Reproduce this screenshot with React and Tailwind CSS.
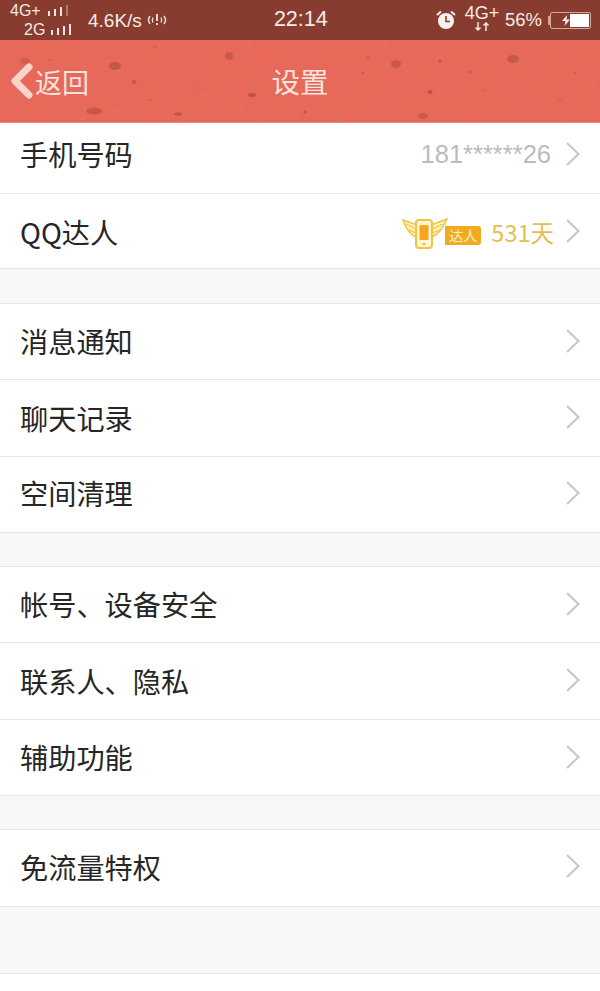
import React from "react";

const cjk = "font-['Noto_Sans_CJK_SC','Noto_Sans',sans-serif]";

function Chevron() {
  return (
    <svg width="16" height="26" viewBox="0 0 16 26" fill="none" className="shrink-0 -mt-[2px]">
      <path d="M2 2 L13.5 13 L2 24" stroke="#c8c8ca" strokeWidth="2.2" />
    </svg>
  );
}

function Row({ label, h, pad = "", children }) {
  return (
    <div className={`flex items-center bg-white pl-[20px] pr-[19px] border-b border-[#e6e6e9] ${h} ${pad}`}>
      <span className="text-[28.2px] leading-none text-[#262626] flex-1">{label}</span>
      {children}
      <Chevron />
    </div>
  );
}

function Gap({ h }) {
  return <div className={`bg-[#f7f8fa] border-b border-[#e6e7ea] ${h}`} />;
}

const spots = [
  [25, 61, 5, 3, 0.5], [115, 66, 6, 4, 0.7], [134, 82, 2.5, 2, 0.7], [94, 111, 8, 3.5, 0.65],
  [178, 114, 4, 1.5, 0.8], [229, 56, 4, 4, 0.6], [252, 95, 4, 2, 0.8], [396, 64, 5, 4, 0.65],
  [440, 61, 1.5, 1.5, 0.8], [513, 59, 6, 4, 0.65], [430, 92, 2.5, 2, 0.9], [305, 112, 2, 2, 0.6],
  [423, 116, 5, 3, 0.6], [155, 47, 2, 1, 0.4], [50, 60, 2, 1.5, 0.4], [368, 58, 1.5, 1.5, 0.5],
  [363, 73, 1.5, 1.5, 0.5], [470, 72, 1.5, 1.5, 0.5], [575, 73, 1.5, 1.5, 0.5], [275, 70, 1.5, 1, 0.4],
  [318, 88, 2, 1, 0.3], [200, 88, 1.5, 1, 0.3], [485, 90, 2, 1, 0.3], [560, 100, 2, 1, 0.3], [150, 100, 2, 1, 0.3],
];

function Texture() {
  return (
    <svg className="absolute inset-0" width="600" height="83" viewBox="0 40 600 83">
      <defs>
        <filter id="grain" x="0" y="0" width="100%" height="100%">
          <feTurbulence type="fractalNoise" baseFrequency="0.09 0.14" numOctaves="3" seed="4" />
          <feColorMatrix values="0 0 0 0 0.62  0 0 0 0 0.24  0 0 0 0 0.18  0 0 0 1.3 -0.62" />
        </filter>
      </defs>
      <rect x="0" y="40" width="600" height="83" filter="url(#grain)" opacity="0.45" />
      {spots.map(([cx, cy, rx, ry, o], i) => (
        <ellipse key={i} cx={cx} cy={cy} rx={rx} ry={ry} fill="#b5503f" opacity={o} />
      ))}
    </svg>
  );
}

function Bars({ dim }) {
  const hs = [5, 7, 9, 11];
  return (
    <span className="flex items-end gap-[4px] h-[11px]">
      {hs.map((x, i) => (
        <span key={i} className="w-[2px] bg-[#f3e4df]" style={{ height: x, opacity: dim && i === 3 ? 0.35 : 1 }} />
      ))}
    </span>
  );
}

export default function App() {
  return (
    <div className={`w-[600px] h-[991px] overflow-hidden bg-white flex flex-col ${cjk}`}>
      <div className="h-[40px] bg-[#873c2f] flex items-center text-[#f6ebe7] font-['Liberation_Sans',sans-serif] pl-[10px] pr-[9px]">
        <div className="w-[66px] flex flex-col text-[16px] leading-[19px]">
          <div className="flex items-center gap-[7px]"><span>4G+</span><Bars dim /></div>
          <div className="flex items-center gap-[6px] pl-[14px]"><span>2G</span><Bars /></div>
        </div>
        <span className="ml-[12px] text-[19px] leading-none">4.6K/s</span>
        <svg width="24" height="16" viewBox="0 0 24 16" className="ml-[3px]" fill="none" stroke="#f3e4df" strokeWidth="1.4">
          <path d="M5 4 Q2 8 5 12 M8 5.5 Q6.5 8 8 10.5 M16 5.5 Q17.5 8 16 10.5 M19 4 Q22 8 19 12" />
          <path d="M12 2 V9 M12 11 V13" strokeWidth="1.8" />
        </svg>
        <span className="ml-[105px] text-[21.5px] leading-none">22:14</span>
        <div className="flex-1" />
        <svg width="20" height="20" viewBox="0 0 20 20" className="mr-[8px]">
          <circle cx="10" cy="11" r="8" fill="#f9f1ee" />
          <path d="M10 6 V11.5 H14" stroke="#873c2f" strokeWidth="1.6" fill="none" />
          <path d="M1 5 L5 1.5 M19 5 L15 1.5" stroke="#f9f1ee" strokeWidth="2" />
        </svg>
        <div className="flex flex-col items-center w-[36px] mr-[5px] -mt-[4px]">
          <span className="text-[18px] leading-[17px]">4G+</span>
          <svg width="16" height="9" viewBox="0 0 16 9" fill="none" stroke="#f3e4df" strokeWidth="1.5">
            <path d="M4 0 V8 M1.5 5.5 L4 8 L6.5 5.5 M12 9 V1 M9.5 3.5 L12 1 L14.5 3.5" />
          </svg>
        </div>
        <span className="text-[18.5px] leading-none mr-[6px]">56%</span>
        <div className="w-[2px] h-[9px] bg-[#d9a79a] rounded-l-[1px]" />
        <div className="w-[41px] h-[17px] border border-[#d9a79a] rounded-[2px] p-[1px] flex items-center justify-end">
          <svg width="10" height="11" viewBox="0 0 10 11" className="mr-[-1px]">
            <path d="M6 0 L1 6 H4.5 L3.5 11 L9 4.5 H5.5 Z" fill="#f6ebe7" />
          </svg>
          <div className="w-[19px] h-full bg-white" />
        </div>
      </div>

      <div className="relative h-[83px] bg-[#e8685a] border-b border-[#f08d80] flex items-center justify-center text-[#f9e3dd]">
        <Texture />
        <span className="relative text-[28.5px] leading-none">设置</span>
        <div className="absolute left-[9px] top-0 bottom-0 flex items-center gap-[1px]">
          <svg width="26" height="36" viewBox="0 0 26 36" fill="none" className="-mr-[1px]">
            <path d="M20 4 L6 18 L20 32" stroke="#f6d5cd" strokeWidth="7" strokeLinecap="round" strokeLinejoin="round" />
          </svg>
          <span className="text-[27px] leading-none">返回</span>
        </div>
      </div>

      <Row label="手机号码" h="h-[71px]" pad="pb-[7px]">
        <span className="text-[25.5px] leading-none text-[#bcbcbe] font-['Liberation_Sans',sans-serif] mr-[14px]">181******26</span>
      </Row>
      <Row label="QQ达人" h="h-[75px]" pad="pt-[2px]">
        <div className="flex items-center mr-[11px] mt-[2px]">
          <svg width="46" height="33" viewBox="0 0 46 33" fill="none" className="-mr-[3px] relative z-10">
            <path d="M1 3 L15 8 L15 20 Q6 18 1 3 Z" fill="#fff2b8" stroke="#efc544" strokeWidth="1.5" />
            <path d="M4 7 L14 12 M7 13 L14 16" stroke="#efc544" strokeWidth="1.3" />
            <path d="M45 2 L29 8 L29 20 Q38 18 45 2 Z" fill="#fff2b8" stroke="#efc544" strokeWidth="1.5" />
            <path d="M41 7 L30 12 M38 13 L30 16" stroke="#efc544" strokeWidth="1.3" />
            <rect x="14" y="3" width="16" height="28" rx="3" fill="#fff6d5" stroke="#efc544" strokeWidth="2" />
            <rect x="17.5" y="8" width="9" height="15" fill="#f5a623" />
            <circle cx="22" cy="27" r="1.6" fill="#efc544" />
          </svg>
          <span className="w-[36px] h-[19px] bg-[#f2aa1f] text-[#fdf0d0] text-[14px] leading-[19px] rounded-r-[3px] text-center mt-[5px] mr-[10px]">达人</span>
          <span className="text-[23.5px] leading-none text-[#e6bd52]">531天</span>
        </div>
      </Row>
      <Gap h="h-[35px]" />

      <Row label="消息通知" h="h-[76px]" />
      <Row label="聊天记录" h="h-[77px]" />
      <Row label="空间清理" h="h-[76px]" pad="pb-[2px]" />
      <Gap h="h-[34px]" />

      <Row label="帐号、设备安全" h="h-[76px]" />
      <Row label="联系人、隐私" h="h-[77px]" />
      <Row label="辅助功能" h="h-[76px]" />
      <Gap h="h-[34px]" />

      <Row label="免流量特权" h="h-[77px]" pad="pb-[2px]" />
      <Gap h="h-[67px]" />
      <div className="flex-1 bg-white" />
    </div>
  );
}
